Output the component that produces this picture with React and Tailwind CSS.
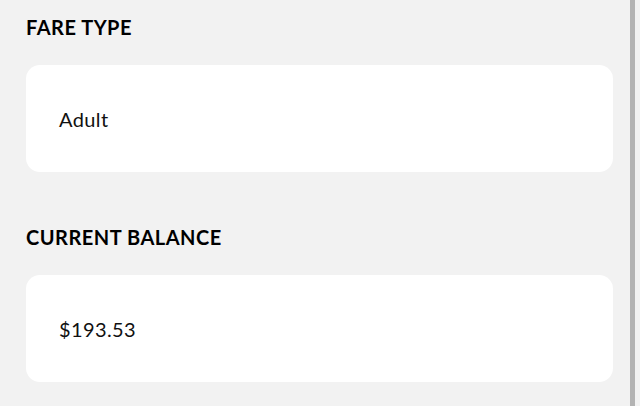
export default function App() {
  return (
    <div className="flex h-[406px] w-[640px] overflow-hidden bg-[#f2f2f2]" style={{ fontFamily: "Lato, 'Noto Sans', sans-serif" }}>
      <div className="flex flex-1 flex-col pl-[26px] pr-[17px] pt-[15px]">
        <h2 className="text-[20px] leading-[24px] font-bold tracking-[0.5px] text-black">FARE TYPE</h2>
        <div className="mt-[26px] flex h-[107px] items-center rounded-[14px] bg-white pl-[33px]">
          <span className="text-[20px] tracking-[0.4px] text-[#111]">Adult</span>
        </div>
        <h2 className="mt-[53px] text-[20px] leading-[24px] font-bold tracking-[0.5px] text-black">CURRENT BALANCE</h2>
        <div className="mt-[26px] flex h-[107px] items-center rounded-[14px] bg-white pl-[33px]">
          <span className="text-[20px] tracking-[0.4px] text-[#111]">$193.53</span>
        </div>
      </div>
      <div className="w-[5px] bg-[#b3b3b3]" />
      <div className="w-[5px]" />
    </div>
  );
}
